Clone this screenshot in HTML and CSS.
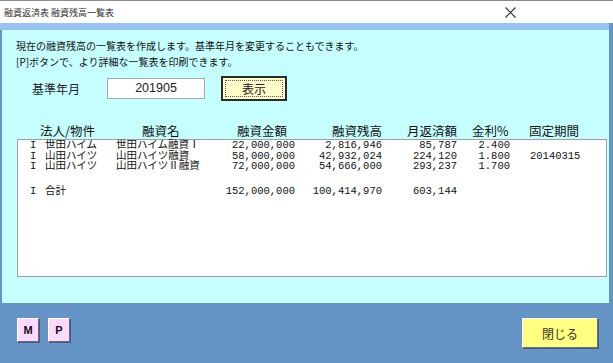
FILE: index.html
```html
<!DOCTYPE html>
<html lang="ja">
<head>
    <meta charset="UTF-8">
    <title>融資返済表 融資残高一覧表</title>
    <link rel="stylesheet" href="styles.css">
</head>
<body>
    <div class="window">
        <div class="titlebar">
            <span class="title">融資返済表 融資残高一覧表</span>
            <span class="close">
                <svg width="11" height="11" viewBox="0 0 11 11"><path d="M0.5 0.5 L10.5 10.5 M10.5 0.5 L0.5 10.5" stroke="#333" stroke-width="1.1" fill="none"/></svg>
            </span>
        </div>
        <div class="top-strip"></div>
        <div class="panel">
            <p class="intro">現在の融資残高の一覧表を作成します。基準年月を変更することもできます。<br>[P]ボタンで、より詳細な一覧表を印刷できます。</p>
            <div class="criteria">
                <label class="criteria-label" for="ym">基準年月</label>
                <div class="ym-box" id="ym">201905</div>
                <button class="show-button"><span>表示</span></button>
            </div>
            <div class="list-head">
                <span>法人/物件</span>
                <span>融資名</span>
                <span>融資金額</span>
                <span>融資残高</span>
                <span>月返済額</span>
                <span>金利%</span>
                <span>固定期間</span>
            </div>
            <div class="list">
                <div class="row">
                    <span>I</span><span>世田ハイム</span><span>世田ハイム融資Ⅰ</span>
                    <span class="num">22,000,000</span><span class="num">2,816,946</span><span class="num">85,787</span><span class="num">2.400</span><span class="fixed"></span>
                </div>
                <div class="row">
                    <span>I</span><span>山田ハイツ</span><span>山田ハイツ融資</span>
                    <span class="num">58,000,000</span><span class="num">42,932,024</span><span class="num">224,120</span><span class="num">1.800</span><span class="fixed">20140315</span>
                </div>
                <div class="row">
                    <span>I</span><span>山田ハイツ</span><span>山田ハイツⅡ融資</span>
                    <span class="num">72,000,000</span><span class="num">54,666,000</span><span class="num">293,237</span><span class="num">1.700</span><span class="fixed"></span>
                </div>
                <div class="row total">
                    <span>I</span><span>合計</span><span></span>
                    <span class="num">152,000,000</span><span class="num">100,414,970</span><span class="num">603,144</span><span class="num"></span><span class="fixed"></span>
                </div>
            </div>
        </div>
        <div class="footer">
            <button class="small-button">M</button>
            <button class="small-button">P</button>
            <button class="close-button">閉じる</button>
        </div>
    </div>
</body>
</html>
```

FILE: styles.css
```css
body {
    margin: 0;
    font-family: "Noto Sans CJK JP", sans-serif;
    color: #222;
}
.window {
    width: 613px;
    height: 363px;
    background: #6594c6;
    overflow: hidden;
    display: flex;
    flex-direction: column;
}
.titlebar {
    height: 23px;
    box-sizing: border-box;
    background: #ffffff;
    border-top: 1px solid #8a8a8a;
    display: flex;
    align-items: center;
    justify-content: space-between;
    padding: 0 97px 0 4px;
}
.title {
    font-size: 9px;
    color: #333;
}
.close {
    display: flex;
}
.top-strip {
    height: 7px;
    background: #9ac3f5;
    margin-right: 4px;
}
.panel {
    height: 273px;
    box-sizing: border-box;
    background: #c6ffff;
    margin: 0 4px 0 2px;
    padding-top: 8px;
}
.intro {
    margin: 0 0 0 14px;
    font-size: 10px;
    line-height: 16px;
    color: #111;
}
.criteria {
    display: flex;
    align-items: center;
    height: 25px;
    margin-top: 6px;
    padding-left: 30px;
}
.criteria-label {
    font-size: 12px;
    width: 75px;
}
.ym-box {
    width: 98px;
    height: 21px;
    box-sizing: border-box;
    background: #ffffff;
    border: 1px solid #a8a8a8;
    font-family: "Liberation Sans", sans-serif;
    font-size: 12.5px;
    line-height: 19px;
    text-align: center;
}
.show-button {
    margin-left: 16px;
    width: 66px;
    height: 25px;
    padding: 2px;
    background: #fffbc8;
    border: 2px solid #2a2a2a;
    font-family: "Noto Sans CJK JP", sans-serif;
    font-size: 12px;
    color: #222;
}
.show-button span {
    display: block;
    height: 100%;
    box-sizing: border-box;
    border: 1px dotted #555;
    line-height: 15px;
}
.list-head {
    display: grid;
    grid-template-columns: 102px 95px 95px 75px 65px 57px 1fr;
    margin-top: 22px;
    padding-left: 38px;
    font-size: 12.5px;
    line-height: 16px;
    color: #111;
}
.list {
    margin-left: 15px;
    width: 590px;
    height: 138px;
    box-sizing: border-box;
    background: #ffffff;
    border: 1px solid #a0a0a0;
    padding-left: 12px;
    font-family: "Liberation Mono", "Noto Sans CJK JP", monospace;
    font-size: 10.5px;
    line-height: 10.5px;
    color: #111;
}
.row {
    display: grid;
    grid-template-columns: 15px 71px 100px 79px 87px 75px 53px 1fr;
    white-space: nowrap;
}
.row .num {
    text-align: right;
}
.row .fixed {
    padding-left: 20px;
}
.row.total {
    margin-top: 14px;
}
.footer {
    flex: 1;
    display: flex;
    align-items: flex-start;
    padding: 15px 15px 0 17px;
    gap: 9px;
}
.small-button {
    width: 22px;
    height: 24px;
    padding: 0;
    background: #ffd8ff;
    border: 1px solid;
    border-color: #ffffff #6a6a6a #6a6a6a #ffffff;
    box-shadow: 1px 1px 0 #3e5e86;
    font-family: "Liberation Sans", sans-serif;
    font-weight: bold;
    font-size: 11px;
    color: #111;
}
.close-button {
    margin-left: auto;
    width: 76px;
    height: 30px;
    padding: 0;
    background: #ffff80;
    border: 1px solid;
    border-color: #ffffff #707070 #707070 #ffffff;
    box-shadow: 1px 1px 0 #3e5e86;
    font-family: "Noto Sans CJK JP", sans-serif;
    font-size: 12px;
    color: #333;
}
```
